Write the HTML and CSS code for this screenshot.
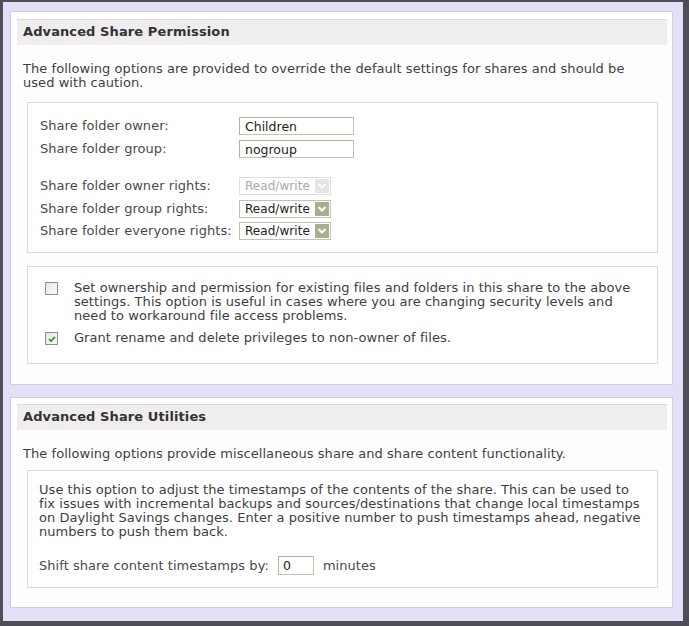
FILE: index.html
```html
<!DOCTYPE html>
<html>
<head>
<meta charset="utf-8">
<title>Advanced Share</title>
<link rel="stylesheet" href="styles.css">
</head>
<body>
<div class="frame">
  <section class="panel panel-perm">
    <h2 class="head">Advanced Share Permission</h2>
    <p class="desc">The following options are provided to override the default settings for shares and should be used with caution.</p>
    <div class="box box-form">
      <div class="row"><span class="label">Share folder owner:</span><input class="text" type="text" value="Children"></div>
      <div class="row"><span class="label">Share folder group:</span><input class="text" type="text" value="nogroup"></div>
      <div class="row row-gap disabled"><span class="label">Share folder owner rights:</span><span class="select"><span class="sel-val">Read/write</span><span class="arrow"><svg width="10" height="8" viewBox="0 0 10 8"><path d="M1.5 2 L5 5.5 L8.5 2" fill="none" stroke="#fff" stroke-width="2"/></svg></span></span></div>
      <div class="row row-sel"><span class="label">Share folder group rights:</span><span class="select"><span class="sel-val">Read/write</span><span class="arrow"><svg width="10" height="8" viewBox="0 0 10 8"><path d="M1.5 2 L5 5.5 L8.5 2" fill="none" stroke="#fff" stroke-width="2"/></svg></span></span></div>
      <div class="row row-sel"><span class="label">Share folder everyone rights:</span><span class="select"><span class="sel-val">Read/write</span><span class="arrow"><svg width="10" height="8" viewBox="0 0 10 8"><path d="M1.5 2 L5 5.5 L8.5 2" fill="none" stroke="#fff" stroke-width="2"/></svg></span></span></div>
    </div>
    <div class="box box-checks">
      <div class="check-row"><span class="cb"></span><span class="check-text">Set ownership and permission for existing files and folders in this share to the above settings. This option is useful in cases where you are changing security levels and need to workaround file access problems.</span></div>
      <div class="check-row check-row-2"><span class="cb checked"><svg width="10" height="10" viewBox="0 0 10 10"><path d="M2 5 L4 7.2 L8 2.8" fill="none" stroke="#3c9a3c" stroke-width="1.8"/></svg></span><span class="check-text">Grant rename and delete privileges to non-owner of files.</span></div>
    </div>
  </section>
  <section class="panel panel-util">
    <h2 class="head">Advanced Share Utilities</h2>
    <p class="desc">The following options provide miscellaneous share and share content functionality.</p>
    <div class="box box-util">
      <p class="util-text">Use this option to adjust the timestamps of the contents of the share. This can be used to fix issues with incremental backups and sources/destinations that change local timestamps on Daylight Savings changes. Enter a positive number to push timestamps ahead, negative numbers to push them back.</p>
      <div class="shift-row"><span class="label">Shift share content timestamps by:</span><input class="text small" type="text" value="0"><span class="unit">minutes</span></div>
    </div>
  </section>
</div>
</body>
</html>
```

FILE: styles.css
```css
* { box-sizing: border-box; }
html, body { margin: 0; padding: 0; }
body {
  width: 689px;
  height: 626px;
  background: #4e4e58;
  font-family: "DejaVu Sans", Verdana, sans-serif;
  font-size: 13px;
  line-height: 14px;
  letter-spacing: 0.05px;
  color: #3e3e3e;
  padding: 2px 6px 5px 3px;
}
.frame {
  background: #e1e0f6;
  height: 619px;
  padding: 9px 10px 13px 7px;
  display: flex;
  flex-direction: column;
  gap: 12px;
}
.panel {
  background: #fefefe;
  border: 1px solid #cfcfdc;
  padding: 7px 5px 0 6px;
}
.panel-perm { height: 374px; }
.panel-util { flex: 1; padding-top: 6px; }
.head {
  margin: 0;
  height: 26px;
  background: #efeded;
  border-top: 1px solid #dcdada;
  font-size: 13px;
  font-weight: bold;
  line-height: 24px;
  letter-spacing: 0.1px;
  padding-left: 6px;
  color: #333;
}
.desc {
  margin: 17px 0 0 6px;
  max-width: 625px;
}
.box {
  border: 1px solid #d9d9d9;
  background: #fff;
  margin: 12px 9px 0 10px;
}
.box-form {
  height: 151px;
  padding: 14px 12px 0 12px;
}
.row {
  display: flex;
  align-items: center;
  height: 18px;
  margin-bottom: 5px;
}
.row-gap { margin-top: 19px; margin-bottom: 5px; }
.row-sel { margin-bottom: 4px; }
.label {
  width: 199px;
  color: #4a4a4a;
}
.text {
  font-family: "DejaVu Sans", Verdana, sans-serif;
  font-size: 12.5px;
  color: #222;
  height: 18px;
  width: 115px;
  border: 1px solid #c4c2aa;
  border-top-color: #b4b29a;
  border-left-color: #b4b29a;
  background: #fff;
  padding: 0 0 0 5px;
  margin: 0;
  outline: none;
}
.select {
  display: flex;
  align-items: center;
  width: 92px;
  height: 18px;
  border: 1px solid #c2c0b0;
  background: #fff;
  padding: 0 1px 0 5px;
  color: #222;
  font-size: 12px;
}
.sel-val { flex: 1; white-space: nowrap; }
.arrow {
  flex: none;
  width: 14px;
  height: 14px;
  background: #a6b08e;
  display: flex;
  align-items: center;
  justify-content: center;
}
.disabled .select { border-color: #dedede; color: #aaa; }
.disabled .arrow { background: #e4e4e4; }
.box-checks {
  margin-top: 13px;
  height: 98px;
  padding: 14px 20px 0 17px;
}
.check-row {
  display: flex;
  align-items: flex-start;
}
.check-row-2 { margin-top: 8px; }
.cb {
  flex: none;
  width: 13px;
  height: 13px;
  border: 1px solid #8e9096;
  background: linear-gradient(135deg, #e6e6e2, #fbfbf9);
  margin-top: 1px;
  margin-right: 16px;
  display: flex;
  align-items: center;
  justify-content: center;
}
.check-text { max-width: 568px; }
.box-util {
  height: 118px;
  padding: 12px 12px 0 11px;
  margin-top: 9px;
}
.util-text { margin: 0; max-width: 606px; }
.shift-row {
  display: flex;
  align-items: center;
  margin-top: 17px;
}
.shift-row .label { width: auto; margin-right: 9px; }
.text.small { width: 36px; height: 19px; padding-left: 4px; }
.unit { margin-left: 9px; color: #4a4a4a; }
```
